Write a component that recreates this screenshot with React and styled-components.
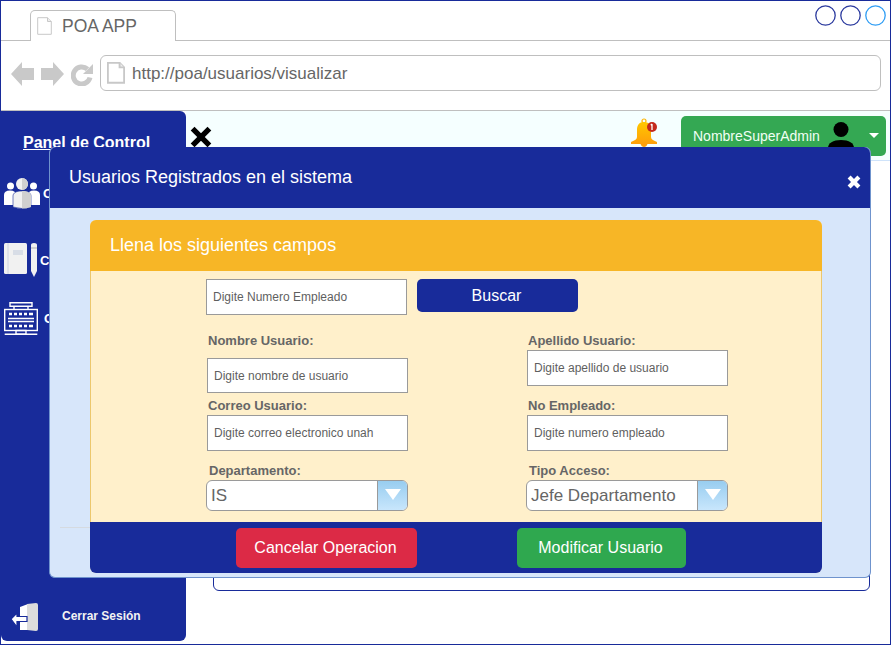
import styled, { createGlobalStyle } from 'styled-components'

const BLUE = '#182b9a'

const Global = createGlobalStyle`
	html, body {
		margin: 0;
		padding: 0;
		background: #fff;
	}
	* {
		box-sizing: border-box;
	}
	body {
		font-family: "Liberation Sans", Arial, sans-serif;
	}
`

function DocIcon({ size = 18, weight = 1 }) {
	return (
		<svg width={size} height={size * 1.2} viewBox="0 0 15 18" fill="none">
			<path d="M.7.7h9.800l3.800 3.800v12.800H.7z" fill="#fff" stroke="#c8c8c8" strokeWidth={weight} />
			<path d="M10.500.7v3.800h3.800" fill="#eee" stroke="#c8c8c8" strokeWidth={weight} />
		</svg>
	)
}

function BackIcon({ flip }) {
	return (
		<svg width="23" height="24" viewBox="0 0 23 24" style={flip ? { transform: 'scaleX(-1)' } : undefined}>
			<path d="M0 12 11 0v6h12v12H11v6z" fill="#c9c9c9" />
		</svg>
	)
}

function ReloadIcon() {
	return (
		<svg width="22" height="23" viewBox="0 0 22 23">
			<path d="M16.500 6.200A8.500 8.500 0 1 0 19 14.500" fill="none" stroke="#c9c9c9" strokeWidth="5" />
			<path d="M22 1v10H12z" fill="#c9c9c9" />
		</svg>
	)
}

function PeopleIcon() {
	return (
		<svg width="36" height="31" viewBox="0 0 36 31">
			<circle cx="6.500" cy="8" r="3.500" fill="#fff" />
			<circle cx="29.500" cy="8" r="3.500" fill="#fff" />
			<path d="M0 27v-10c0-3 2-4.500 6-4.500s6 1.500 6 4.500v10z" fill="#fff" />
			<path d="M24 27v-10c0-3 2-4.500 6-4.500s6 1.500 6 4.500v10z" fill="#fff" />
			<circle cx="18" cy="6" r="6" fill="#f1f1f1" />
			<path d="M18 0a6 6 0 0 1 0 12z" fill="#d0d0d0" />
			<path d="M9 29V18c0-3 3-5 9-5s9 2 9 5v11q-9 3-18 0z" fill="#f1f1f1" stroke={BLUE} strokeWidth=".6" />
			<path d="M18 13c6 0 9 2 9 5v11q-4.500 1.500-9 1.500z" fill="#d0d0d0" />
		</svg>
	)
}

function NotebookIcon() {
	return (
		<svg width="33" height="34" viewBox="0 0 33 34">
			<rect x="0" y="0" width="23" height="31" rx="1.500" fill="#f1f1f1" />
			<path d="M4 0v31" stroke="#cdd3e0" strokeWidth="1" />
			<rect x="9" y="7" width="10" height="5" fill="#d8dde6" />
			<path d="M27 2q0-2 3-2t3 2v26l-3 6-3-6z" fill="#f1f1f1" />
			<path d="M27 5h6" stroke="#c4c4c4" strokeWidth="1.500" />
		</svg>
	)
}

function DeskIcon() {
	return (
		<svg width="34" height="33" viewBox="0 0 34 33" fill="none" stroke="#fff" strokeWidth="1.400">
			<path d="M6 .7h22v3.500H6zM10 4.200v3M24 4.200v3" />
			<rect x=".7" y="7.500" width="32.600" height="21" />
			<path d="M4 16.500h26M4 19.500h26" />
			<path d="M5 12h3M10 12h3M15 12h3M20 12h3M25 12h4M5 24h3M10 24h3M15 24h3M20 24h3M25 24h4" strokeWidth="2.600" />
			<path d="M12 32.300v-3.800h10v3.800z" />
			<path d="M.7 32.300h32.600" />
		</svg>
	)
}

function LogoutIcon() {
	return (
		<svg width="27" height="28" viewBox="0 0 27 28">
			<path d="M9 4l8-3v26H9z" fill="#fff" />
			<path d="M16 1l9-1q2 0 2 2v24q0 2-2 2l-9-1z" fill="#dcdcdc" />
			<path d="M0 16l6-6v3.500h10v5H6V24z" fill="#fff" stroke={BLUE} strokeWidth="1.200" />
		</svg>
	)
}

function BellIcon() {
	return (
		<svg width="29" height="30" viewBox="0 0 29 30">
			<defs>
				<linearGradient id="bellFill" x1="0" y1="0" x2="0" y2="1">
					<stop offset="0" stopColor="#ffc800" />
					<stop offset="1" stopColor="#ff9f0a" />
				</linearGradient>
			</defs>
			<circle cx="14" cy="3" r="2" fill="none" stroke="#ffb400" strokeWidth="1.200" />
			<path d="M14 4c-5 0-7 3.500-7 8v7c0 2-2 3.500-6 5v2h26v-2c-4-1.500-6-3-6-5v-7c0-4.500-2-8-7-8z" fill="url(#bellFill)" />
			<path d="M10.500 26h7q-1 3-3.500 3t-3.500-3z" fill="#ff9f0a" />
			<circle cx="22" cy="9" r="5" fill="#c4291c" />
			<path d="M22 6v6M20.800 7.300 22 6" stroke="#fff" strokeWidth="1.300" fill="none" />
		</svg>
	)
}

function UserIcon() {
	return (
		<svg width="26" height="34" viewBox="0 0 26 34">
			<circle cx="13" cy="7.500" r="7.500" fill="#000" />
			<path d="M0 34v-8c0-5 5-8 13-8s13 3 13 8v8z" fill="#000" />
		</svg>
	)
}

function CloseIcon({ size, color, weight = 4.5 }) {
	return (
		<svg width={size} height={size} viewBox="0 0 20 20">
			<path d="M3 3l14 14M17 3 3 17" stroke={color} strokeWidth={weight} />
		</svg>
	)
}

function WindowDot({ color }) {
	return (
		<svg width="21" height="21" viewBox="0 0 21 21">
			<circle cx="10.500" cy="10.500" r="9.700" fill="none" stroke={color} strokeWidth="1.300" />
		</svg>
	)
}

function App() {
	return (
		<Window>
			<Global />
			<TabStrip>
				<Tab>
					<DocIcon size={15} />
					<TabTitle>POA APP</TabTitle>
				</Tab>
				<WindowControls>
					<WindowDot color="#2b3a9e" />
					<WindowDot color="#2b3a9e" />
					<WindowDot color="#2f9df4" />
				</WindowControls>
			</TabStrip>
			<NavRow>
				<NavButtons>
					<BackIcon />
					<BackIcon flip />
					<ReloadIcon />
				</NavButtons>
				<AddressBar>
					<DocIcon size={18} weight={1.6} />
					<AddressText>http://poa/usuarios/visualizar</AddressText>
				</AddressBar>
			</NavRow>
			<AppBody>
				<Sidebar>
					<SidebarTitle>
						<u>Pan</u>el de Control
					</SidebarTitle>
					<SideItem $top={27}>
						<PeopleIcon />
						<SideLabel $indent={3}>C</SideLabel>
					</SideItem>
					<SideItem $top={34}>
						<NotebookIcon />
						<SideLabel $indent={3}>C</SideLabel>
					</SideItem>
					<SideItem $top={25}>
						<DeskIcon />
						<SideLabel $indent={6}>C</SideLabel>
					</SideItem>
					<LogoutRow>
						<LogoutIcon />
						<LogoutText>Cerrar Sesión</LogoutText>
					</LogoutRow>
				</Sidebar>
				<Main>
					<TopBar>
						<TopBarClose>
							<CloseIcon size={24} color="#000" />
						</TopBarClose>
						<TopBarRight>
							<BellSlot>
								<BellIcon />
							</BellSlot>
							<UserButton>
								<UserName>NombreSuperAdmin</UserName>
								<UserSlot>
									<UserIcon />
								</UserSlot>
								<Caret />
							</UserButton>
						</TopBarRight>
					</TopBar>
					<ContentPanel />
				</Main>
			</AppBody>
			<Modal>
				<ModalHeader>
					<ModalTitle>Usuarios Registrados en el sistema</ModalTitle>
					<ModalClose>
						<CloseIcon size={14} color="#fff" weight={6} />
					</ModalClose>
				</ModalHeader>
				<ModalBody>
					<FooterRule />
					<Card>
						<CardHeader>Llena los siguientes campos</CardHeader>
						<CardForm>
							<SearchRow>
								<InputBox $width={201} $height={36}>Digite Numero Empleado</InputBox>
								<SearchButton>Buscar</SearchButton>
							</SearchRow>
							<FieldGrid>
								<FieldColumn $indent={116}>
									<Field>
										<FieldLabel>Nombre Usuario:</FieldLabel>
										<InputBox $top={10} $height={35}>Digite nombre de usuario</InputBox>
									</Field>
									<Field>
										<FieldLabel>Correo Usuario:</FieldLabel>
										<InputBox $top={2}>Digite correo electronico unah</InputBox>
									</Field>
									<Field>
										<FieldLabel $nudge={2}>Departamento:</FieldLabel>
										<SelectBox>
											<SelectValue>IS</SelectValue>
											<SelectArrow />
										</SelectBox>
									</Field>
								</FieldColumn>
								<FieldColumn $indent={0}>
									<Field>
										<FieldLabel>Apellido Usuario:</FieldLabel>
										<InputBox $top={2}>Digite apellido de usuario</InputBox>
									</Field>
									<Field>
										<FieldLabel>No Empleado:</FieldLabel>
										<InputBox $top={2}>Digite numero empleado</InputBox>
									</Field>
									<Field>
										<FieldLabel $nudge={2}>Tipo Acceso:</FieldLabel>
										<SelectBox>
											<SelectValue>Jefe Departamento</SelectValue>
											<SelectArrow />
										</SelectBox>
									</Field>
								</FieldColumn>
							</FieldGrid>
						</CardForm>
						<CardFooter>
							<ActionButton $color="#dc2a46" $width={181}>Cancelar Operacion</ActionButton>
							<ActionButton $color="#2fa84f" $width={169}>Modificar Usuario</ActionButton>
						</CardFooter>
					</Card>
				</ModalBody>
			</Modal>
		</Window>
	)
}

const Window = styled.div`
	position: relative;
	width: 891px;
	height: 645px;
	border: 1px solid ${BLUE};
	display: flex;
	flex-direction: column;
	overflow: hidden;
	background: #fff;
`

const TabStrip = styled.div`
	height: 40px;
	flex-shrink: 0;
	padding: 0 4px 0 29px;
	border-bottom: 1px solid #bfbfbf;
	display: flex;
	justify-content: space-between;
	align-items: flex-start;
`

const Tab = styled.div`
	width: 146px;
	height: 31px;
	margin-top: 9px;
	padding: 0 0 0 6px;
	background: #fff;
	border: 1px solid #bfbfbf;
	border-bottom: none;
	border-radius: 5px 5px 0 0;
	display: flex;
	align-items: center;
	gap: 10px;
`

const TabTitle = styled.span`
	font-size: 17.5px;
	color: #666;
`

const WindowControls = styled.div`
	display: flex;
	gap: 4px;
	margin-top: 4px;
`

const NavRow = styled.div`
	height: 70px;
	flex-shrink: 0;
	padding: 14px 8px 0 10px;
	border-bottom: 1px solid #bfbfbf;
	display: flex;
	align-items: flex-start;
`

const NavButtons = styled.div`
	width: 89px;
	padding-top: 7px;
	display: flex;
	gap: 7px;
	align-items: center;
`

const AddressBar = styled.div`
	width: 781px;
	height: 36px;
	padding-left: 6px;
	border: 1px solid #bfbfbf;
	border-radius: 6px;
	display: flex;
	align-items: center;
	gap: 7px;
`

const AddressText = styled.span`
	padding-top: 1px;
	font-size: 17px;
	color: #666;
`

const AppBody = styled.div`
	flex: 1;
	display: flex;
	min-height: 0;
`

const Sidebar = styled.aside`
	width: 185px;
	height: 530px;
	padding: 23px 0 0 3px;
	background: ${BLUE};
	border-radius: 0 6px 6px 6px;
	display: flex;
	flex-direction: column;
	flex-shrink: 0;
`

const SidebarTitle = styled.div`
	padding-left: 19px;
	font-size: 16px;
	line-height: 17px;
	font-weight: bold;
	color: #fff;
`

const SideItem = styled.div`
	margin-top: ${({ $top }) => $top}px;
	display: flex;
	align-items: center;
`

const SideLabel = styled.span`
	margin-left: ${({ $indent }) => $indent}px;
	font-size: 13px;
	font-weight: bold;
	color: #fff;
`

const LogoutRow = styled.div`
	margin-top: auto;
	padding: 0 0 10px 7px;
	display: flex;
	align-items: center;
	gap: 24px;
`

const LogoutText = styled.span`
	margin-top: -2px;
	font-size: 12px;
	font-weight: bold;
	color: #f2f2f2;
`

const Main = styled.main`
	flex: 1;
	display: flex;
	flex-direction: column;
`

const TopBar = styled.div`
	height: 50px;
	padding: 0 4px 0 3px;
	background: #f5ffff;
	border-bottom: 1px solid #cfe3fa;
	display: flex;
	align-items: center;
	justify-content: space-between;
`

const TopBarClose = styled.span`
	display: flex;
	margin-top: 3px;
`

const TopBarRight = styled.div`
	display: flex;
	align-items: center;
	gap: 22px;
`

const BellSlot = styled.span`
	display: flex;
	margin-bottom: 5px;
`

const UserButton = styled.div`
	width: 205px;
	height: 40px;
	padding: 0 6px 0 12px;
	background: #34a853;
	border-radius: 5px;
	display: flex;
	align-items: center;
`

const UserName = styled.span`
	width: 135px;
	font-size: 14px;
	color: #f0fff4;
`

const UserSlot = styled.span`
	display: flex;
	margin-top: 6px;
`

const Caret = styled.span`
	margin-left: 15px;
	border-left: 5px solid transparent;
	border-right: 5px solid transparent;
	border-top: 5px solid #fff;
`

const ContentPanel = styled.div`
	width: 657px;
	height: 421px;
	margin: 9px 0 0 27px;
	border: 1px solid ${BLUE};
	border-radius: 6px;
`

const Modal = styled.section`
	position: absolute;
	left: 48px;
	top: 146px;
	width: 822px;
	height: 431px;
	background: #d7e6fa;
	border: 1px solid #6f93cd;
	border-top: none;
	border-radius: 6px;
	display: flex;
	flex-direction: column;
`

const ModalHeader = styled.header`
	height: 61px;
	padding: 0 9px 0 19px;
	background: ${BLUE};
	border-radius: 6px 6px 0 0;
	display: flex;
	align-items: center;
	justify-content: space-between;
`

const ModalTitle = styled.h2`
	margin: 0;
	font-size: 18px;
	font-weight: normal;
	color: #fff;
`

const ModalClose = styled.span`
	display: flex;
	margin-top: 8px;
`

const ModalBody = styled.div`
	position: relative;
	flex: 1;
	padding: 12px 48px 4px 40px;
`

const FooterRule = styled.div`
	position: absolute;
	left: 10px;
	width: 40px;
	top: 319px;
	height: 1px;
	background: #d5dae0;
`

const Card = styled.div`
	position: relative;
	height: 353px;
	background: #fff0cb;
	border-radius: 6px;
	display: flex;
	flex-direction: column;
	overflow: hidden;
`

const CardHeader = styled.div`
	height: 51px;
	padding-left: 20px;
	background: #f7b626;
	font-size: 18px;
	color: #fff;
	display: flex;
	align-items: center;
`

const CardForm = styled.div`
	flex: 1;
	padding-top: 8px;
	border-left: 1px solid #ecc76c;
	border-right: 1px solid #ecc76c;
`

const SearchRow = styled.div`
	padding-left: 115px;
	display: flex;
	align-items: flex-start;
	gap: 10px;
`

const InputBox = styled.div`
	width: ${({ $width }) => $width || 201}px;
	height: ${({ $height }) => $height || 36}px;
	margin-top: ${({ $top }) => $top || 0}px;
	padding-left: 6px;
	background: #fff;
	border: 1px solid #9a9a9a;
	font-size: 12px;
	color: #5f5f5f;
	display: flex;
	align-items: center;
`

const SearchButton = styled.button`
	width: 161px;
	height: 33px;
	padding: 0 2px 0 0;
	background: ${BLUE};
	border: none;
	border-radius: 5px;
	font: 16px "Liberation Sans", Arial, sans-serif;
	color: #fff;
`

const FieldGrid = styled.div`
	margin-top: 18px;
	display: grid;
	grid-template-columns: 436px 1fr;
`

const FieldColumn = styled.div`
	padding-left: ${({ $indent }) => $indent}px;
	display: grid;
	grid-template-rows: 65px 65px auto;
`

const Field = styled.div`
	display: flex;
	flex-direction: column;
`

const FieldLabel = styled.label`
	padding-left: ${({ $nudge }) => $nudge || 1}px;
	font-size: 13px;
	line-height: 15px;
	font-weight: bold;
	color: #666;
`

const SelectBox = styled.div`
	width: 202px;
	height: 31px;
	margin: 2px 0 0 -1px;
	background: #fff;
	border: 1px solid #9a9a9a;
	border-radius: 6px;
	display: flex;
	overflow: hidden;
`

const SelectValue = styled.span`
	flex: 1;
	padding-left: 4px;
	font-size: 17px;
	line-height: 29px;
	color: #666;
`

const SelectArrow = styled.span`
	position: relative;
	width: 30px;
	background: linear-gradient(180deg, #98cdf0, #c8e6fc);
	border-left: 1px solid #9a9a9a;
	&::after {
		content: '';
		position: absolute;
		left: 7px;
		top: 8px;
		border-left: 8px solid transparent;
		border-right: 8px solid transparent;
		border-top: 11px solid #fff;
	}
`

const CardFooter = styled.div`
	height: 51px;
	padding: 6px 0 0 146px;
	background: ${BLUE};
	display: flex;
	gap: 100px;
	align-items: flex-start;
`

const ActionButton = styled.button`
	width: ${({ $width }) => $width}px;
	height: 40px;
	padding: 0 2px 0 0;
	background: ${({ $color }) => $color};
	border: none;
	border-radius: 5px;
	font: 16px "Liberation Sans", Arial, sans-serif;
	color: #fff;
`

export default App
